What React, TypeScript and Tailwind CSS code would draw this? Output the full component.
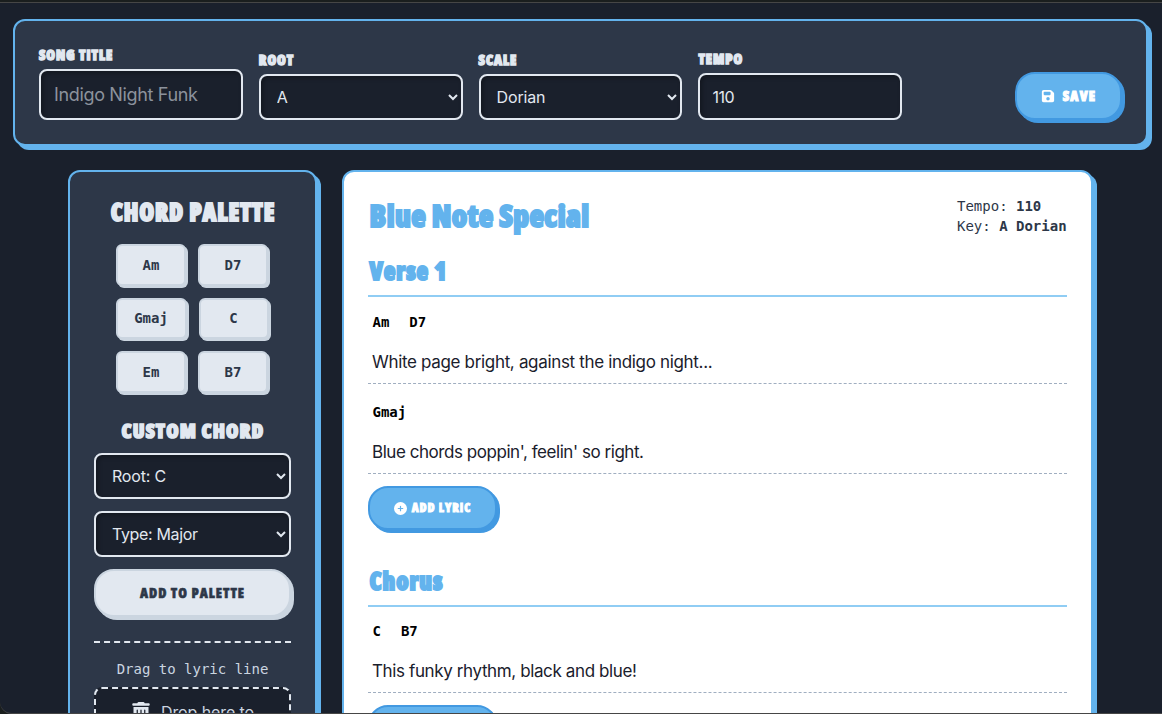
import React from "react";
import { FaFloppyDisk, FaCirclePlus, FaTrashCan } from "react-icons/fa6";

const display = "font-['Open_Sans',sans-serif] font-extrabold [font-stretch:75%]";
const mono = "font-['DejaVu_Sans_Mono','Liberation_Mono',monospace]";
const field =
  "block w-full rounded-lg border-2 border-[#e2e8f0] bg-[#1a202c] px-3 text-[#e2e8f0] shadow-[inset_2px_2px_4px_rgba(0,0,0,0.3)] outline-none";

function Label({ children }: { children: React.ReactNode }) {
  return (
    <div className={`${display} mb-1 h-5 whitespace-nowrap text-[14px] leading-5 tracking-[1px] uppercase text-[#e2e8f0] [-webkit-text-stroke:1.4px_#e2e8f0]`}>
      {children}
    </div>
  );
}

function Select({ value, track = "" }: { value: string; track?: string }) {
  return (
    <select defaultValue={value} className={`${field} h-[46px] text-[16px] ${track}`}>
      <option>{value}</option>
    </select>
  );
}

function Chord({ name, width }: { name: string; width: string }) {
  return (
    <div className={`${mono} ${width} flex h-[41.5px] items-center justify-center rounded-md border-2 border-[#cbd5e0] bg-[#e2e8f0] pt-px text-[14px] font-bold text-[#2d3748] shadow-[2px_2px_0_#cbd5e0]`}>
      {name}
    </div>
  );
}

function SectionTitle({ children }: { children: string }) {
  return (
    <h3 className={`${display} h-[42px] border-b-2 border-[#90cdf4] pl-[1.5px] text-[24px] leading-8 tracking-[0.9px] text-[#63b3ed] [-webkit-text-stroke:1.9px_#63b3ed]`}>
      {children}
    </h3>
  );
}

function Line({ chords, text, height, track }: { chords: string[]; text: string; height: string; track: string }) {
  return (
    <div className={`${height} flex flex-col justify-end border-b border-dashed border-[#a0aec0] px-1`}>
      <div className={`${mono} flex h-5 gap-5 pl-[0.5px] text-[14px] leading-5 font-bold text-black`}>
        {chords.map((c) => (
          <span key={c}>{c}</span>
        ))}
      </div>
      <div className={`mt-3 h-[39px] whitespace-nowrap pt-[2px] text-[17px] leading-8 text-[#1a202c] ${track}`}>{text}</div>
    </div>
  );
}

function AddLyric() {
  return (
    <button className={`${display} mt-3 flex h-[44px] w-[129px] shrink-0 items-center justify-center gap-[5px] rounded-[20px] border-2 border-[#4299e1] bg-[#63b3ed] text-[12px] tracking-[1px] text-white shadow-[3px_3px_0_#4299e1] [-webkit-text-stroke:0.9px_white]`}>
      <FaCirclePlus className="size-[13px] [stroke-width:0]" />
      ADD LYRIC
    </button>
  );
}

export default function App() {
  return (
    <div className="relative h-[714px] w-[1162px] overflow-hidden bg-[#1a202c] pt-[19px] pl-[13px] font-['Inter','Open_Sans',sans-serif]">
      <header className="grid h-[127px] w-[1135px] grid-cols-5 items-end gap-4 rounded-xl border-2 border-[#63b3ed] bg-[#2d3748] p-6 shadow-[4px_4px_0_#63b3ed]">
        <div>
          <Label>Song Title</Label>
          <input placeholder="Indigo Night Funk" className={`${field} h-[51px] pl-[13px] text-[18px] tracking-[-0.35px] placeholder:text-[#8c929c]`} />
        </div>
        <div>
          <Label>Root</Label>
          <Select value="A" />
        </div>
        <div>
          <Label>Scale</Label>
          <Select value="Dorian" track="tracking-[-0.15px]" />
        </div>
        <div>
          <Label>Tempo</Label>
          <input defaultValue="110" className={`${field} h-[47px] text-[16px] tracking-[-0.4px]`} />
        </div>
        <button className={`${display} flex h-12 w-[107px] items-center justify-center gap-2 justify-self-end rounded-[20px] border-2 border-[#4299e1] bg-[#63b3ed] pb-px text-[14px] tracking-[1.3px] text-white shadow-[3px_3px_0_#4299e1] [-webkit-text-stroke:1.1px_white]`}>
          <FaFloppyDisk className="size-[14px] [stroke-width:0]" />
          SAVE
        </button>
      </header>

      <div className="mt-6 ml-[55px] flex gap-[25px]">
        <aside className="h-[640px] w-[249px] rounded-xl border-2 border-[#63b3ed] bg-[#2d3748] p-6 shadow-[4px_4px_0_#63b3ed]">
          <h2 className={`${display} h-8 whitespace-nowrap pl-px text-center text-[24px] leading-8 tracking-[0.9px] text-[#e2e8f0] [-webkit-text-stroke:1.8px_#e2e8f0]`}>CHORD PALETTE</h2>
          <div className="mt-4 flex flex-wrap justify-center gap-3 pr-px">
            <Chord name="Am" width="w-[70px]" />
            <Chord name="D7" width="w-[70px]" />
            <Chord name="Gmaj" width="w-[71px]" />
            <Chord name="C" width="w-[70px]" />
            <Chord name="Em" width="w-[70px]" />
            <Chord name="B7" width="w-[70px]" />
          </div>
          <h3 className={`${display} mt-6 h-7 whitespace-nowrap pl-px text-center text-[20px] leading-7 tracking-[1.1px] text-[#e2e8f0] [-webkit-text-stroke:1.6px_#e2e8f0]`}>CUSTOM CHORD</h3>
          <div className="mt-2 flex flex-col gap-3">
            <Select value="Root: C" track="tracking-[-0.2px]" />
            <Select value="Type: Major" track="tracking-[-0.35px]" />
            <button className={`${display} h-12 rounded-[20px] border-2 border-[#cbd5e0] bg-[#e2e8f0] text-[14px] tracking-[1px] text-[#2d3748] shadow-[3px_3px_0_#cbd5e0] [-webkit-text-stroke:0.6px_#2d3748]`}>ADD TO PALETTE</button>
          </div>
          <div className="mt-6 border-t-2 border-dashed border-[#e2e8f0]" />
          <div className={`${mono} mt-4 h-5 text-center text-[14px] leading-5 text-[#cbd5e0]`}>Drag to lyric line</div>
          <div className="mt-2 flex h-[80px] justify-center gap-3 rounded-lg border-2 border-dashed border-[#e2e8f0] bg-[#1a202c] pt-3 text-[16px] leading-6 tracking-[-0.1px] text-[#cbd5e0]">
            <FaTrashCan className="mt-px size-5 text-[#e2e8f0]" />
            <span className="-mt-px -ml-0.5">Drop here to</span>
          </div>
        </aside>

        <main className="h-[640px] w-[751px] rounded-xl border-2 border-[#63b3ed] bg-white p-6 shadow-[4px_4px_0_#63b3ed]">
          <div className="flex justify-between">
            <h1 className={`${display} h-[59px] whitespace-nowrap pt-0.5 pl-[1.5px] text-[30px] leading-9 tracking-[0.4px] text-[#63b3ed] [-webkit-text-stroke:2px_#63b3ed]`}>Blue Note Special</h1>
            <div className={`${mono} w-[110px] whitespace-nowrap text-[14px] leading-5 text-[#2d3748]`}>
              <div>Tempo: <b>110</b></div>
              <div>Key: <b>A Dorian</b></div>
            </div>
          </div>
          <SectionTitle>Verse 1</SectionTitle>
          <Line chords={["Am", "D7"]} text="White page bright, against the indigo night..." height="h-[87px]" track="tracking-[-0.33px]" />
          <Line chords={["Gmaj"]} text="Blue chords poppin', feelin' so right." height="h-[90px]" track="tracking-[-0.45px]" />
          <AddLyric />
          <div className="h-[35px]" />
          <SectionTitle>Chorus</SectionTitle>
          <Line chords={["C", "B7"]} text="This funky rhythm, black and blue!" height="h-[86px]" track="tracking-[-0.38px]" />
          <AddLyric />
        </main>
      </div>
      <div className="pointer-events-none absolute inset-x-0 top-0 h-0.5 bg-[#1a1e1e]" />
      <div className="pointer-events-none absolute inset-x-0 top-0.5 bottom-0 rounded-bl-xl border-y border-[#464646] shadow-[0_0_0_12px_#1a1e1e]" />
    </div>
  );
}
